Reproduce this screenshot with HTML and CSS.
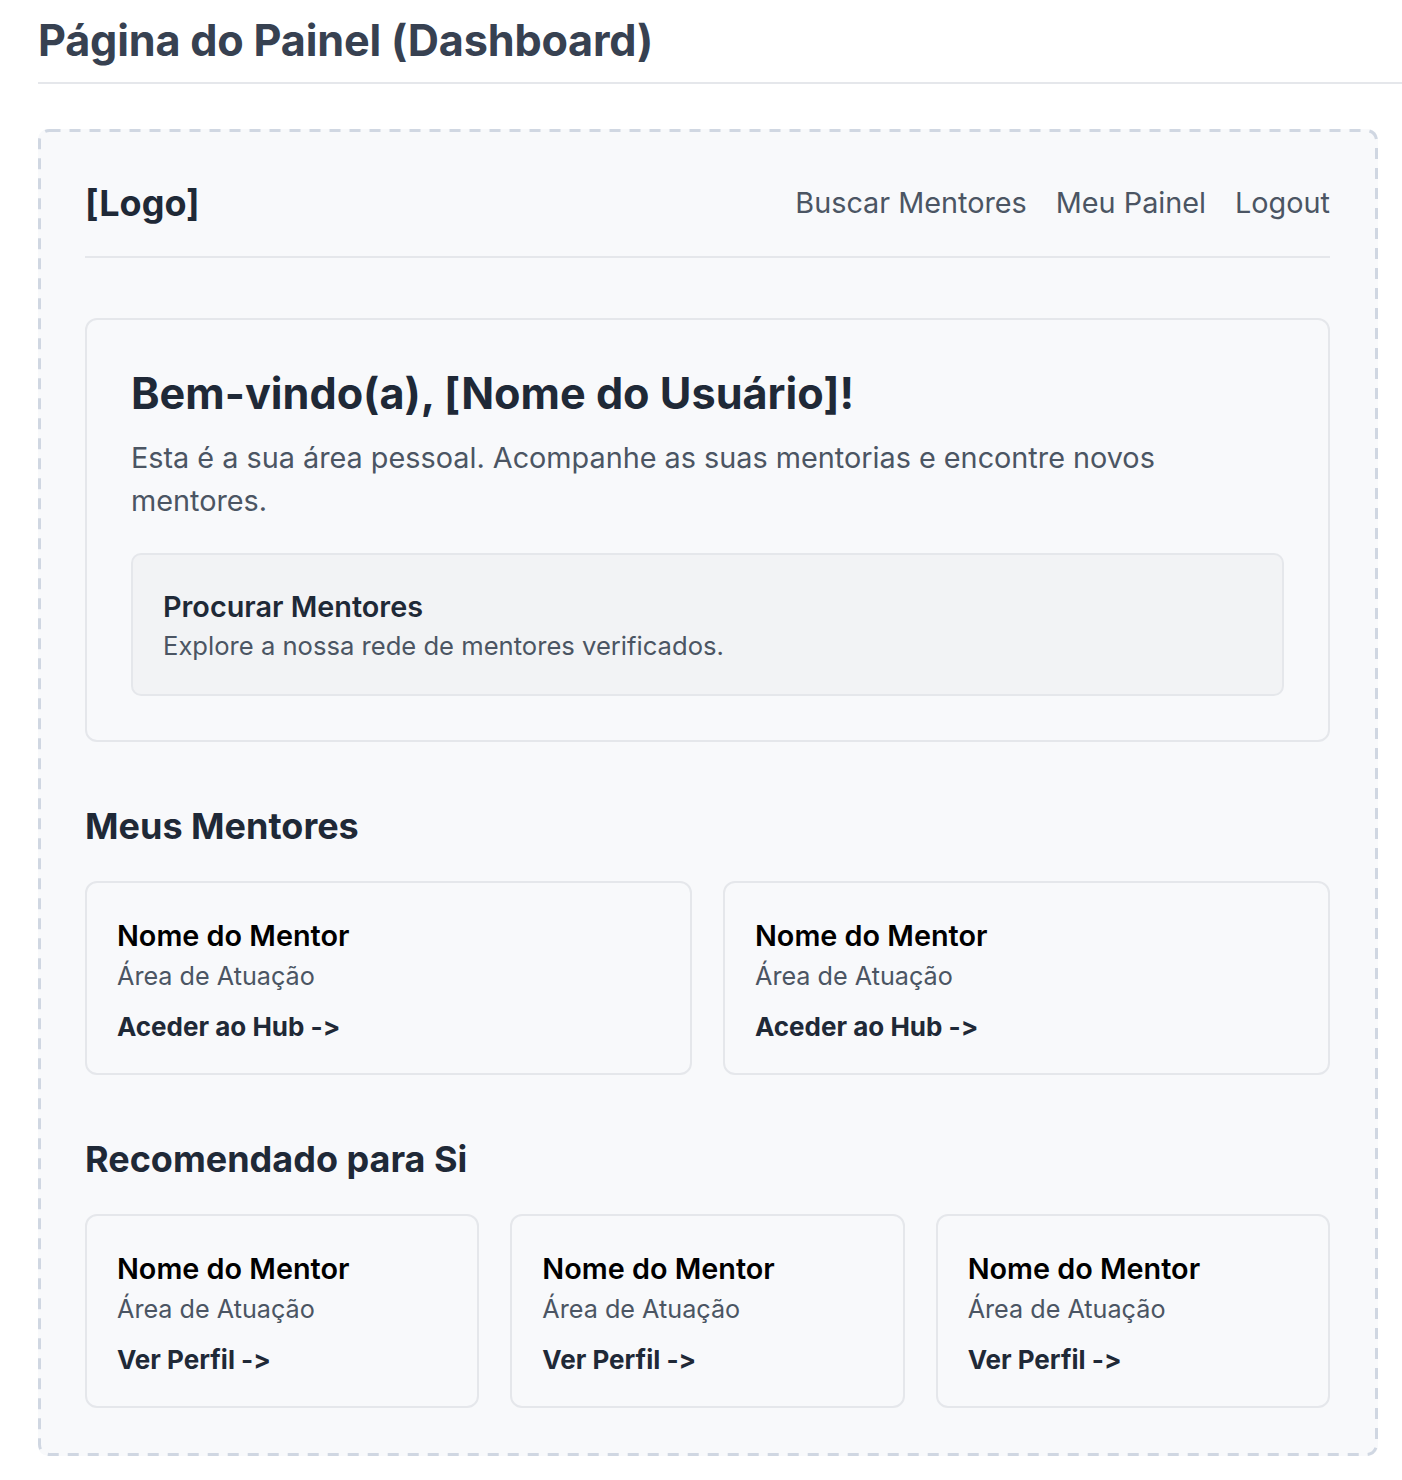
FILE: index.html
```html
<!DOCTYPE html>
<html lang="pt">
<head>
<meta charset="utf-8">
<title>Página do Painel (Dashboard)</title>
<link rel="stylesheet" href="styles.css">
</head>
<body>
<main class="page">
  <h1 class="page-title">Página do Painel (Dashboard)</h1>
  <section class="frame">
    <svg class="frame-border" aria-hidden="true"><rect rx="10" ry="10"></rect></svg>
    <header class="nav">
      <div class="logo">[Logo]</div>
      <nav class="nav-links">
        <a href="#">Buscar Mentores</a>
        <a href="#">Meu Painel</a>
        <a href="#">Logout</a>
      </nav>
    </header>

    <section class="welcome">
      <h2 class="welcome-title">Bem-vindo(a), [Nome do Usuário]!</h2>
      <p class="welcome-text">Esta é a sua área pessoal. Acompanhe as suas mentorias e encontre novos mentores.</p>
      <div class="search-box">
        <h3 class="search-title">Procurar Mentores</h3>
        <p class="search-desc">Explore a nossa rede de mentores verificados.</p>
      </div>
    </section>

    <h2 class="section-title">Meus Mentores</h2>
    <div class="grid grid-2">
      <div class="card">
        <div class="card-name">Nome do Mentor</div>
        <div class="card-area">Área de Atuação</div>
        <a class="card-link" href="#">Aceder ao Hub -&gt;</a>
      </div>
      <div class="card">
        <div class="card-name">Nome do Mentor</div>
        <div class="card-area">Área de Atuação</div>
        <a class="card-link" href="#">Aceder ao Hub -&gt;</a>
      </div>
    </div>

    <h2 class="section-title">Recomendado para Si</h2>
    <div class="grid grid-3">
      <div class="card">
        <div class="card-name">Nome do Mentor</div>
        <div class="card-area">Área de Atuação</div>
        <a class="card-link" href="#">Ver Perfil -&gt;</a>
      </div>
      <div class="card">
        <div class="card-name">Nome do Mentor</div>
        <div class="card-area">Área de Atuação</div>
        <a class="card-link" href="#">Ver Perfil -&gt;</a>
      </div>
      <div class="card">
        <div class="card-name">Nome do Mentor</div>
        <div class="card-area">Área de Atuação</div>
        <a class="card-link" href="#">Ver Perfil -&gt;</a>
      </div>
    </div>
  </section>
</main>
</body>
</html>
```

FILE: styles.css
```css
* {
  box-sizing: border-box;
}

html, body {
  margin: 0;
  padding: 0;
  background: #ffffff;
}

body {
  font-family: Inter, "Noto Sans", "Liberation Sans", sans-serif;
  font-feature-settings: "calt" 0;
  font-variant-ligatures: none;
  color: #1f2937;
}

.page {
  padding: 0 0 24px 38px;
}

.page-title {
  margin: 15px 0 0 0;
  padding-bottom: 17px;
  font-size: 43.2px;
  line-height: 50px;
  font-weight: 700;
  color: #374151;
  border-bottom: 2px solid #e5e7eb;
  letter-spacing: -0.2px;
}

.frame {
  position: relative;
  margin: 45px 24px 0 0;
  border: 3px solid transparent;
  border-radius: 10px;
  background: #f8f9fb;
  padding: 44px 45px 45px 44px;
}

.frame-border {
  position: absolute;
  top: -3px;
  left: -3px;
  width: calc(100% + 6px);
  height: calc(100% + 6px);
  pointer-events: none;
  overflow: visible;
}

.frame-border rect {
  x: 1.5px;
  y: 1.5px;
  width: calc(100% - 3px);
  height: calc(100% - 3px);
  fill: none;
  stroke: #d0d7e2;
  stroke-width: 3;
  stroke-dasharray: 11 9;
}

.nav {
  display: flex;
  align-items: center;
  justify-content: space-between;
  padding-bottom: 26px;
  border-bottom: 2px solid #e5e7eb;
}

.logo {
  font-size: 36px;
  line-height: 54px;
  font-weight: 700;
  color: #1f2937;
}

.nav-links {
  display: flex;
  gap: 29px;
}

.nav-links a {
  font-size: 28.8px;
  line-height: 40px;
  color: #4b5563;
  text-decoration: none;
}

.welcome {
  margin-top: 60px;
  border: 2px solid #e5e7eb;
  border-radius: 12px;
  padding: 44px;
}

.welcome-title {
  margin: 5px 0 0 0;
  font-size: 43.2px;
  line-height: 48px;
  font-weight: 700;
  color: #1f2937;
}

.welcome-text {
  margin: 19px 0 0 0;
  font-size: 28.8px;
  line-height: 43px;
  color: #4b5563;
}

.search-box {
  margin-top: 31px;
  background: #f2f3f5;
  border: 2px solid #e5e7eb;
  border-radius: 10px;
  padding: 34px 30px 30px 30px;
}

.search-title {
  margin: 0;
  font-size: 28.8px;
  line-height: 36px;
  font-weight: 600;
  color: #1f2937;
}

.search-desc {
  margin: 3px 0 0 0;
  font-size: 25.6px;
  line-height: 36px;
  color: #4b5563;
}

.section-title {
  margin: 62px 0 33px 0;
  font-size: 36px;
  line-height: 44px;
  font-weight: 700;
  color: #1f2937;
}

.grid {
  display: grid;
  gap: 31px;
}

.grid-2 {
  grid-template-columns: repeat(2, 1fr);
}

.grid-3 {
  grid-template-columns: repeat(3, 1fr);
}

.card {
  border: 2px solid #e5e7eb;
  border-radius: 12px;
  padding: 35px 30px 28px 30px;
  display: flex;
  flex-direction: column;
  align-items: flex-start;
}

.card-name {
  font-size: 28.8px;
  line-height: 36px;
  font-weight: 600;
  color: #000000;
}

.card-area {
  margin-top: 4px;
  font-size: 25.2px;
  line-height: 36px;
  color: #4b5563;
}

.card-link {
  margin-top: 15px;
  font-size: 26px;
  line-height: 36px;
  font-weight: 700;
  color: #1f2937;
  text-decoration: none;
}
```
